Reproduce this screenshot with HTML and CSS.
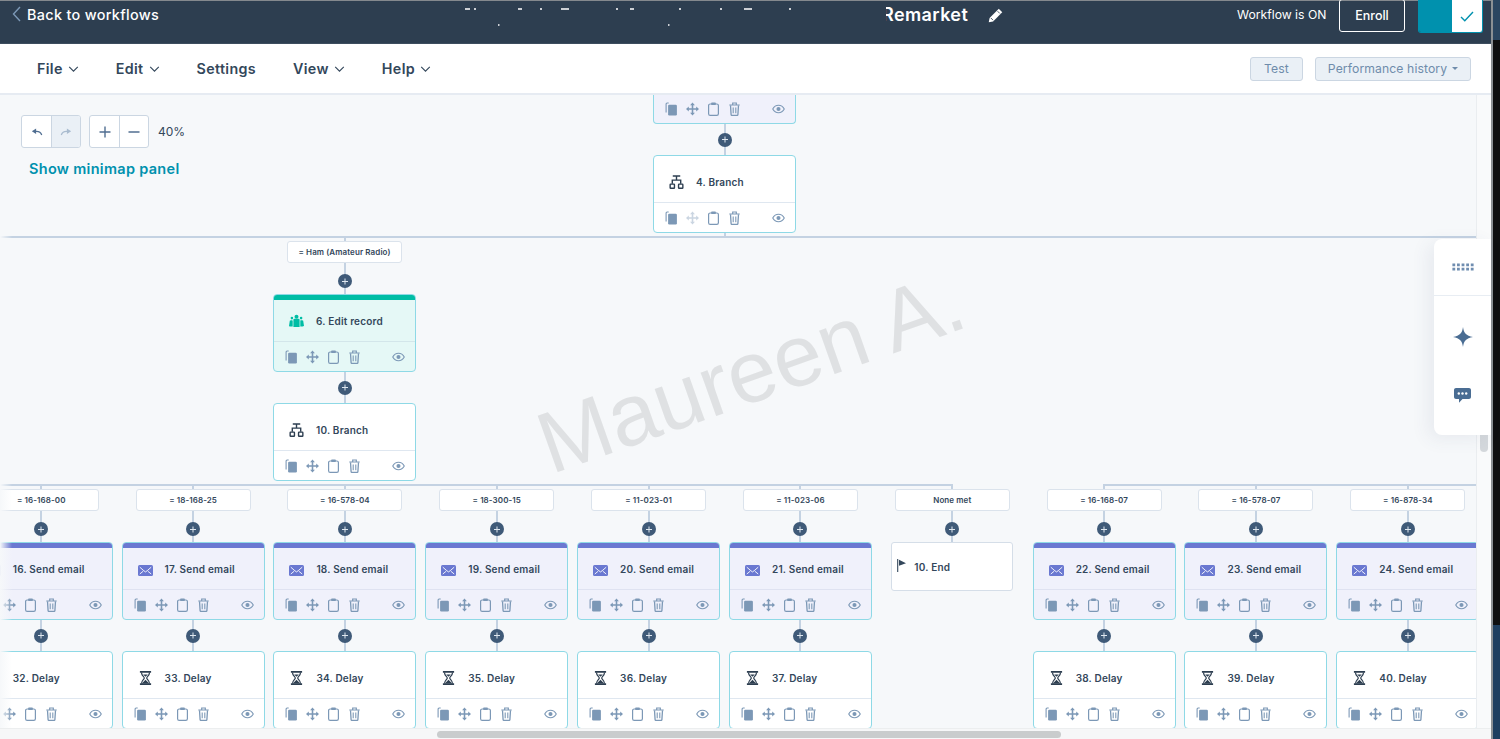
FILE: index.html
```html
<!DOCTYPE html>
<html lang="en">
<head>
<meta charset="utf-8">
<title>Workflow editor</title>
<link rel="stylesheet" href="styles.css">
</head>
<body>
<svg class="sprite" aria-hidden="true">
  <symbol id="i-copy" viewBox="0 0 12 14"><path d="M3.2 1H1.6C1 1 .6 1.4.6 2v8.4" fill="none" stroke="currentColor" stroke-width="1.1"/><rect x="2.6" y="2.8" width="8.8" height="10.6" rx="1.2" fill="currentColor"/></symbol>
  <symbol id="i-move" viewBox="0 0 14 14"><path d="M7 1.500v11M1.500 7h11" stroke="currentColor" stroke-width="1.700"/><path d="M7 0l2.600 3H4.400zM7 14l2.600-3H4.400zM0 7l3-2.600v5.200zM14 7l-3-2.600v5.200z" fill="currentColor"/></symbol>
  <symbol id="i-paste" viewBox="0 0 12 14"><rect x="1.1" y="2" width="9.8" height="11.3" rx="1.6" fill="none" stroke="currentColor" stroke-width="1.2"/><rect x="3.6" y=".6" width="4.8" height="2.4" rx=".8" fill="currentColor"/></symbol>
  <symbol id="i-trash" viewBox="0 0 12 14"><path d="M.8 3h10.400M4.200 2.600V1h3.600v1.600" fill="none" stroke="currentColor" stroke-width="1.200"/><path d="M2 3.400l.6 9.200c0 .4.400.8.800.8h5.200c.4 0 .8-.4.800-.8l.6-9.200" fill="none" stroke="currentColor" stroke-width="1.300"/><path d="M4.700 5.600v5.600M7.300 5.600v5.600" stroke="currentColor" stroke-width="1.100"/></symbol>
  <symbol id="i-eye" viewBox="0 0 14 10"><path d="M.8 5C2.200 2.400 4.400 1 7 1s4.800 1.400 6.200 4C11.800 7.600 9.600 9 7 9S2.200 7.600.8 5z" fill="none" stroke="currentColor" stroke-width="1.200"/><circle cx="7" cy="5" r="2.200" fill="currentColor"/></symbol>
  <symbol id="i-branch" viewBox="0 0 16 15"><path d="M4 1h8M8 1v4M3.500 9.500V5.500h9v4" fill="none" stroke="currentColor" stroke-width="1.500"/><rect x="1.200" y="9.800" width="4.600" height="4.400" rx=".6" fill="none" stroke="currentColor" stroke-width="1.500"/><rect x="10.200" y="9.800" width="4.600" height="4.400" rx=".6" fill="none" stroke="currentColor" stroke-width="1.500"/></symbol>
  <symbol id="i-mail" viewBox="0 0 15 11"><rect width="15" height="11" rx="1.500" fill="#6a78d1"/><path d="M1.800 2.200l4 3.500 1.700 1.200 1.700-1.200 4-3.500M1.800 9l3.400-2.800M13.200 9l-3.400-2.800" fill="none" stroke="#fff" stroke-width=".9"/></symbol>
  <symbol id="i-delay" viewBox="0 0 13 15"><path d="M.5 1h12M.5 14h12" stroke="currentColor" stroke-width="1.800"/><path d="M2.200 1.500c0 3.500 3 4.500 3 6s-3 2.500-3 6M10.800 1.500c0 3.500-3 4.500-3 6s3 2.500 3 6" fill="none" stroke="currentColor" stroke-width="1.300"/><path d="M6.500 9.500l4 4h-8zM4 3.800h5l-2.500 2.400z" fill="currentColor"/></symbol>
  <symbol id="i-people" viewBox="0 0 15 13"><circle cx="7.500" cy="2.200" r="2" fill="currentColor"/><path d="M4.400 5.400c0-.8.700-1.100 1.400-1.100h3.400c.7 0 1.400.3 1.400 1.100v7.200H4.400z" fill="currentColor"/><circle cx="2.900" cy="3.600" r="1.300" fill="currentColor"/><circle cx="12.100" cy="3.600" r="1.300" fill="currentColor"/><path d="M0 11.500l.8-5.200c.1-.7 3-.9 2.900 0v5.800H.6zM15 11.500l-.8-5.200c-.1-.7-3-.9-2.900 0v5.800h2.100z" fill="currentColor"/></symbol>
</svg>

<div class="window">
  <header class="topbar">
    <a class="back"><svg class="back-chev" viewBox="0 0 9 16"><path d="M8 1L1.500 8 8 15" fill="none" stroke="currentColor" stroke-width="1.400"/></svg>Back to workflows</a>
    <svg class="shards" viewBox="0 0 340 20" aria-hidden="true"><path d="M5 1h5M14 1h2M58 1h4M80 1h2M101 1h8M156 1h2M170 1h4M219 1h2M260 1h2M284 1h8M329 1h2M38 17h1.500M208 17h1.500" stroke="#fff" stroke-width="1.300"/></svg>
    <div class="title"><span class="title-text">Remarket</span></div>
    <svg class="pencil" viewBox="0 0 16 16"><path d="M11.500.8l3.700 3.700L5.400 14.300.8 15.200l.9-4.600z" fill="#fff"/><path d="M10.200 3.400l2.400 2.400M3 10.600l2.400 2.400" stroke="#2d3e50" stroke-width=".9"/></svg>
    <span class="status">Workflow is ON</span>
    <button class="enroll">Enroll</button>
    <div class="toggle"><span class="toggle-on"></span><span class="toggle-knob"><svg viewBox="0 0 14 11"><path d="M1 6l3.800 3.800L13 1" fill="none" stroke="#0091ae" stroke-width="1.400"/></svg></span></div>
  </header>

  <nav class="menubar">
    <span class="menu">File<svg class="chev" viewBox="0 0 12 7"><path d="M1 1l5 5 5-5" fill="none" stroke="currentColor" stroke-width="1.300"/></svg></span>
    <span class="menu">Edit<svg class="chev" viewBox="0 0 12 7"><path d="M1 1l5 5 5-5" fill="none" stroke="currentColor" stroke-width="1.300"/></svg></span>
    <span class="menu">Settings</span>
    <span class="menu">View<svg class="chev" viewBox="0 0 12 7"><path d="M1 1l5 5 5-5" fill="none" stroke="currentColor" stroke-width="1.300"/></svg></span>
    <span class="menu">Help<svg class="chev" viewBox="0 0 12 7"><path d="M1 1l5 5 5-5" fill="none" stroke="currentColor" stroke-width="1.300"/></svg></span>
    <span class="spacer"></span>
    <button class="ghost test">Test</button>
    <button class="ghost perf">Performance history<span class="caret"></span></button>
  </nav>

  <main class="work">
    <section class="canvas">
      <div class="controls">
        <div class="tool-row">
          <div class="btn-group">
            <span class="tool"><svg viewBox="0 0 14 10"><path d="M12.500 8.500C11.500 5.500 9 4 5.500 4.300" fill="none" stroke="currentColor" stroke-width="1.500"/><path d="M1 4.200L6 .8v6.400z" fill="currentColor"/></svg></span>
            <span class="tool off"><svg viewBox="0 0 14 10"><path d="M1.500 8.500C2.500 5.500 5 4 8.500 4.300" fill="none" stroke="currentColor" stroke-width="1.500"/><path d="M13 4.200L8 .8v6.400z" fill="currentColor"/></svg></span>
          </div>
          <div class="btn-group">
            <span class="tool"><svg viewBox="0 0 12 12"><path d="M6 .5v11M.5 6h11" stroke="currentColor" stroke-width="1.400"/></svg></span>
            <span class="tool"><svg viewBox="0 0 12 12"><path d="M.5 6h11" stroke="currentColor" stroke-width="1.400"/></svg></span>
          </div>
          <span class="zoom-level">40%</span>
        </div>
        <a class="minimap">Show minimap panel</a>
      </div>

      <div class="rail rail-top"></div>
      <div class="rail rail-a"></div>
      <div class="rail rail-b"></div>

      <div class="tree tree-top">
        <div class="node email cut">
          <div class="foot"><svg class="f"><use href="#i-copy"/></svg><svg class="f"><use href="#i-move"/></svg><svg class="f"><use href="#i-paste"/></svg><svg class="f"><use href="#i-trash"/></svg><svg class="e"><use href="#i-eye"/></svg></div>
        </div>
        <div class="link"><span class="plus"></span></div>
        <div class="node">
          <div class="band"></div>
          <div class="head"><svg class="ico"><use href="#i-branch"/></svg><span>4. Branch</span></div>
          <div class="foot"><svg class="f"><use href="#i-copy"/></svg><svg class="f dim"><use href="#i-move"/></svg><svg class="f"><use href="#i-paste"/></svg><svg class="f"><use href="#i-trash"/></svg><svg class="e"><use href="#i-eye"/></svg></div>
        </div>
        <div class="stub"></div>
      </div>

      <div class="tree tree-ham">
        <div class="stub"></div>
        <div class="pill">= Ham (Amateur Radio)</div>
        <div class="link"><span class="plus"></span></div>
        <div class="node record">
          <div class="band"></div>
          <div class="head"><svg class="ico teal"><use href="#i-people"/></svg><span>6. Edit record</span></div>
          <div class="foot"><svg class="f"><use href="#i-copy"/></svg><svg class="f"><use href="#i-move"/></svg><svg class="f"><use href="#i-paste"/></svg><svg class="f"><use href="#i-trash"/></svg><svg class="e"><use href="#i-eye"/></svg></div>
        </div>
        <div class="link"><span class="plus"></span></div>
        <div class="node">
          <div class="band"></div>
          <div class="head"><svg class="ico"><use href="#i-branch"/></svg><span>10. Branch</span></div>
          <div class="foot"><svg class="f"><use href="#i-copy"/></svg><svg class="f"><use href="#i-move"/></svg><svg class="f"><use href="#i-paste"/></svg><svg class="f"><use href="#i-trash"/></svg><svg class="e"><use href="#i-eye"/></svg></div>
        </div>
      </div>

      <div class="branches">
        <div class="col">
          <div class="stub"></div><div class="pill">= 16-168-00</div><div class="link"><span class="plus"></span></div>
          <div class="node email"><div class="band"></div><div class="head"><svg class="ico-mail"><use href="#i-mail"/></svg><span>16. Send email</span></div><div class="foot"><svg class="f"><use href="#i-copy"/></svg><svg class="f"><use href="#i-move"/></svg><svg class="f"><use href="#i-paste"/></svg><svg class="f"><use href="#i-trash"/></svg><svg class="e"><use href="#i-eye"/></svg></div></div>
          <div class="link"><span class="plus"></span></div>
          <div class="node"><div class="band"></div><div class="head"><svg class="ico"><use href="#i-delay"/></svg><span>32. Delay</span></div><div class="foot"><svg class="f"><use href="#i-copy"/></svg><svg class="f"><use href="#i-move"/></svg><svg class="f"><use href="#i-paste"/></svg><svg class="f"><use href="#i-trash"/></svg><svg class="e"><use href="#i-eye"/></svg></div></div>
        </div>
        <div class="col">
          <div class="stub"></div><div class="pill">= 18-168-25</div><div class="link"><span class="plus"></span></div>
          <div class="node email"><div class="band"></div><div class="head"><svg class="ico-mail"><use href="#i-mail"/></svg><span>17. Send email</span></div><div class="foot"><svg class="f"><use href="#i-copy"/></svg><svg class="f"><use href="#i-move"/></svg><svg class="f"><use href="#i-paste"/></svg><svg class="f"><use href="#i-trash"/></svg><svg class="e"><use href="#i-eye"/></svg></div></div>
          <div class="link"><span class="plus"></span></div>
          <div class="node"><div class="band"></div><div class="head"><svg class="ico"><use href="#i-delay"/></svg><span>33. Delay</span></div><div class="foot"><svg class="f"><use href="#i-copy"/></svg><svg class="f"><use href="#i-move"/></svg><svg class="f"><use href="#i-paste"/></svg><svg class="f"><use href="#i-trash"/></svg><svg class="e"><use href="#i-eye"/></svg></div></div>
        </div>
        <div class="col">
          <div class="stub"></div><div class="pill">= 16-578-04</div><div class="link"><span class="plus"></span></div>
          <div class="node email"><div class="band"></div><div class="head"><svg class="ico-mail"><use href="#i-mail"/></svg><span>18. Send email</span></div><div class="foot"><svg class="f"><use href="#i-copy"/></svg><svg class="f"><use href="#i-move"/></svg><svg class="f"><use href="#i-paste"/></svg><svg class="f"><use href="#i-trash"/></svg><svg class="e"><use href="#i-eye"/></svg></div></div>
          <div class="link"><span class="plus"></span></div>
          <div class="node"><div class="band"></div><div class="head"><svg class="ico"><use href="#i-delay"/></svg><span>34. Delay</span></div><div class="foot"><svg class="f"><use href="#i-copy"/></svg><svg class="f"><use href="#i-move"/></svg><svg class="f"><use href="#i-paste"/></svg><svg class="f"><use href="#i-trash"/></svg><svg class="e"><use href="#i-eye"/></svg></div></div>
        </div>
        <div class="col">
          <div class="stub"></div><div class="pill">= 18-300-15</div><div class="link"><span class="plus"></span></div>
          <div class="node email"><div class="band"></div><div class="head"><svg class="ico-mail"><use href="#i-mail"/></svg><span>19. Send email</span></div><div class="foot"><svg class="f"><use href="#i-copy"/></svg><svg class="f"><use href="#i-move"/></svg><svg class="f"><use href="#i-paste"/></svg><svg class="f"><use href="#i-trash"/></svg><svg class="e"><use href="#i-eye"/></svg></div></div>
          <div class="link"><span class="plus"></span></div>
          <div class="node"><div class="band"></div><div class="head"><svg class="ico"><use href="#i-delay"/></svg><span>35. Delay</span></div><div class="foot"><svg class="f"><use href="#i-copy"/></svg><svg class="f"><use href="#i-move"/></svg><svg class="f"><use href="#i-paste"/></svg><svg class="f"><use href="#i-trash"/></svg><svg class="e"><use href="#i-eye"/></svg></div></div>
        </div>
        <div class="col">
          <div class="stub"></div><div class="pill">= 11-023-01</div><div class="link"><span class="plus"></span></div>
          <div class="node email"><div class="band"></div><div class="head"><svg class="ico-mail"><use href="#i-mail"/></svg><span>20. Send email</span></div><div class="foot"><svg class="f"><use href="#i-copy"/></svg><svg class="f"><use href="#i-move"/></svg><svg class="f"><use href="#i-paste"/></svg><svg class="f"><use href="#i-trash"/></svg><svg class="e"><use href="#i-eye"/></svg></div></div>
          <div class="link"><span class="plus"></span></div>
          <div class="node"><div class="band"></div><div class="head"><svg class="ico"><use href="#i-delay"/></svg><span>36. Delay</span></div><div class="foot"><svg class="f"><use href="#i-copy"/></svg><svg class="f"><use href="#i-move"/></svg><svg class="f"><use href="#i-paste"/></svg><svg class="f"><use href="#i-trash"/></svg><svg class="e"><use href="#i-eye"/></svg></div></div>
        </div>
        <div class="col">
          <div class="stub"></div><div class="pill">= 11-023-06</div><div class="link"><span class="plus"></span></div>
          <div class="node email"><div class="band"></div><div class="head"><svg class="ico-mail"><use href="#i-mail"/></svg><span>21. Send email</span></div><div class="foot"><svg class="f"><use href="#i-copy"/></svg><svg class="f"><use href="#i-move"/></svg><svg class="f"><use href="#i-paste"/></svg><svg class="f"><use href="#i-trash"/></svg><svg class="e"><use href="#i-eye"/></svg></div></div>
          <div class="link"><span class="plus"></span></div>
          <div class="node"><div class="band"></div><div class="head"><svg class="ico"><use href="#i-delay"/></svg><span>37. Delay</span></div><div class="foot"><svg class="f"><use href="#i-copy"/></svg><svg class="f"><use href="#i-move"/></svg><svg class="f"><use href="#i-paste"/></svg><svg class="f"><use href="#i-trash"/></svg><svg class="e"><use href="#i-eye"/></svg></div></div>
        </div>
        <div class="col">
          <div class="stub"></div><div class="pill">None met</div><div class="link"><span class="plus"></span></div>
          <div class="end"><svg class="flag" viewBox="0 0 10 13"><path d="M.7 0v13" stroke="#33475b" stroke-width="1.100"/><path d="M2 .8l7 3.400-7 2.600z" fill="#33475b"/></svg><span>10. End</span></div>
        </div>
        <div class="col">
          <div class="stub"></div><div class="pill">= 16-168-07</div><div class="link"><span class="plus"></span></div>
          <div class="node email"><div class="band"></div><div class="head"><svg class="ico-mail"><use href="#i-mail"/></svg><span>22. Send email</span></div><div class="foot"><svg class="f"><use href="#i-copy"/></svg><svg class="f"><use href="#i-move"/></svg><svg class="f"><use href="#i-paste"/></svg><svg class="f"><use href="#i-trash"/></svg><svg class="e"><use href="#i-eye"/></svg></div></div>
          <div class="link"><span class="plus"></span></div>
          <div class="node"><div class="band"></div><div class="head"><svg class="ico"><use href="#i-delay"/></svg><span>38. Delay</span></div><div class="foot"><svg class="f"><use href="#i-copy"/></svg><svg class="f"><use href="#i-move"/></svg><svg class="f"><use href="#i-paste"/></svg><svg class="f"><use href="#i-trash"/></svg><svg class="e"><use href="#i-eye"/></svg></div></div>
        </div>
        <div class="col">
          <div class="stub"></div><div class="pill">= 16-578-07</div><div class="link"><span class="plus"></span></div>
          <div class="node email"><div class="band"></div><div class="head"><svg class="ico-mail"><use href="#i-mail"/></svg><span>23. Send email</span></div><div class="foot"><svg class="f"><use href="#i-copy"/></svg><svg class="f"><use href="#i-move"/></svg><svg class="f"><use href="#i-paste"/></svg><svg class="f"><use href="#i-trash"/></svg><svg class="e"><use href="#i-eye"/></svg></div></div>
          <div class="link"><span class="plus"></span></div>
          <div class="node"><div class="band"></div><div class="head"><svg class="ico"><use href="#i-delay"/></svg><span>39. Delay</span></div><div class="foot"><svg class="f"><use href="#i-copy"/></svg><svg class="f"><use href="#i-move"/></svg><svg class="f"><use href="#i-paste"/></svg><svg class="f"><use href="#i-trash"/></svg><svg class="e"><use href="#i-eye"/></svg></div></div>
        </div>
        <div class="col">
          <div class="stub"></div><div class="pill">= 16-878-34</div><div class="link"><span class="plus"></span></div>
          <div class="node email"><div class="band"></div><div class="head"><svg class="ico-mail"><use href="#i-mail"/></svg><span>24. Send email</span></div><div class="foot"><svg class="f"><use href="#i-copy"/></svg><svg class="f"><use href="#i-move"/></svg><svg class="f"><use href="#i-paste"/></svg><svg class="f"><use href="#i-trash"/></svg><svg class="e"><use href="#i-eye"/></svg></div></div>
          <div class="link"><span class="plus"></span></div>
          <div class="node"><div class="band"></div><div class="head"><svg class="ico"><use href="#i-delay"/></svg><span>40. Delay</span></div><div class="foot"><svg class="f"><use href="#i-copy"/></svg><svg class="f"><use href="#i-move"/></svg><svg class="f"><use href="#i-paste"/></svg><svg class="f"><use href="#i-trash"/></svg><svg class="e"><use href="#i-eye"/></svg></div></div>
        </div>
      </div>

      <div class="fade-left"></div>
      <div class="watermark">Maureen A.</div>
    </section>
    <aside class="vstrip"><span class="vthumb"></span></aside>
    <div class="sidepanel">
      <div class="side-top"><svg class="side-grid" viewBox="0 0 22 8"><path d="M.4 .4h2.800v2.800H.4zM5 .4h2.800v2.800H5zM9.600 .4h2.800v2.800H9.600zM14.200 .4H17v2.800h-2.800zM18.800 .4h2.800v2.800h-2.800zM.4 4.800h2.800v2.800H.4zM5 4.800h2.800v2.800H5zM9.600 4.800h2.800v2.800H9.600zM14.200 4.800H17v2.800h-2.800zM18.800 4.800h2.800v2.800h-2.800z" fill="#6f8db0"/></svg></div>
      <div class="side-rest">
        <svg class="side-star" viewBox="0 0 20 20"><path d="M10 0c.8 6 3 8.600 10 10-7 1.400-9.200 4-10 10-.8-6-3-8.600-10-10 7-1.400 9.200-4 10-10z" fill="#4a6d93"/></svg>
        <svg class="side-chat" viewBox="0 0 17 15"><path d="M2 0h13c1.100 0 2 .9 2 2v7c0 1.100-.9 2-2 2H8.500L5 14.800V11H2c-1.100 0-2-.9-2-2V2C0 .9.900 0 2 0z" fill="#4a6d93"/><circle cx="4.800" cy="5.500" r="1.200" fill="#fff"/><circle cx="8.500" cy="5.500" r="1.200" fill="#fff"/><circle cx="12.200" cy="5.500" r="1.200" fill="#fff"/></svg>
      </div>
    </div>
  </main>
  <div class="hscroll"><span class="hthumb"></span></div>
</div>
<div class="edge"></div>
</body>
</html>
```
FILE: styles.css
```css
* { box-sizing: border-box; }
html, body { margin: 0; height: 739px; overflow: hidden; }
body { display: flex; font-family: Inter, "Noto Sans", "Liberation Sans", sans-serif; color: #33475b; background: #111; }
.sprite { position: absolute; width: 0; height: 0; }
.window { width: 1491px; height: 739px; display: flex; flex-direction: column; background: #fff; flex: none; }
.edge { width: 9px; height: 739px; border-left: 2px solid #8b9094; background: linear-gradient(#2b4661 0 40px, #0e0f10 40px 625px, #1e3f60 625px); }

/* top bar */
.topbar { position: relative; height: 44px; flex: none; display: flex; align-items: flex-start; background: #2d3e50; border-top: 1px solid #84898e; border-bottom: 1px solid #3d4d5e; color: #fff; }
.back { display: flex; align-items: center; margin: 3px 0 0 12px; height: 20px; font-size: 14.400px; font-weight: 500; letter-spacing: .32px; }
.back-chev { width: 9px; height: 16px; margin-right: 6px; color: #7c98b6; }
.shards { position: absolute; left: 460px; top: 7px; width: 340px; height: 20px; }
.title { position: absolute; left: 884px; top: 3px; height: 22px; }
.title::before { content: ""; position: absolute; left: -2px; top: 3px; width: 3.500px; height: 16px; background: #2d3e50; }
.title-text { display: block; margin-left: -2px; font-size: 18px; line-height: 22px; font-weight: 600; letter-spacing: .4px; white-space: nowrap; }
.pencil { position: absolute; left: 988px; top: 7px; width: 15px; height: 15px; }
.status { position: absolute; left: 1237px; top: 5px; font-size: 12.200px; line-height: 18px; }
.enroll { position: absolute; left: 1339px; top: -2px; width: 66px; height: 33px; padding: 0; background: transparent; border: 1px solid #fff; border-radius: 3px; color: #fff; font: 500 12.500px Inter, sans-serif; }
.toggle { position: absolute; left: 1418px; top: -1px; width: 65px; height: 33px; display: flex; border-radius: 0 0 3px 3px; overflow: hidden; border: 1px solid #0091ae; border-top: 0; }
.toggle-on { width: 33px; background: #0091ae; }
.toggle-knob { flex: 1; background: #fff; display: flex; align-items: center; justify-content: center; }
.toggle-knob svg { width: 14px; height: 11px; }

/* menu bar */
.menubar { height: 51px; flex: none; display: flex; align-items: center; padding: 0 20px 0 37px; background: #fff; border-bottom: 2px solid #e6ebf2; }
.menu { display: flex; align-items: center; font-size: 14.300px; font-weight: 600; letter-spacing: .35px; margin-right: 37px; }
.chev { width: 11px; height: 6px; margin-left: 5px; }
.spacer { flex: 1; }
.ghost { height: 24px; padding: 0; background: #eaf0f6; border: 1px solid #cbd6e2; border-radius: 3px; color: #6f8cab; font: 400 12.200px Inter, sans-serif; letter-spacing: .1px; }
.test { width: 53px; margin-right: 12px; }
.perf { width: 156px; display: flex; align-items: center; justify-content: center; }
.caret { width: 0; height: 0; margin-left: 5px; border: 3.500px solid transparent; border-top-color: #6f8cab; border-bottom: 0; }

/* work area */
.work { position: relative; flex: 1; display: flex; min-height: 0; }
.canvas { position: relative; width: 1476px; height: 633px; overflow: hidden; background: #f6f8fa; flex: none; }
.vstrip { position: relative; flex: 1; background: #f9fafb; border-left: 1px solid #eaedf0; }
.vthumb { position: absolute; left: 3px; top: 200px; width: 8px; height: 157px; border-radius: 4px; background: #d4d8dc; }
.hscroll { position: relative; height: 11px; flex: none; background: #f6f7f8; border-top: 1px solid #eceeef; }
.hthumb { position: absolute; left: 437px; top: 2px; width: 624px; height: 7px; border-radius: 4px; background: #c9cccd; }

.controls { position: absolute; left: 21px; top: 20px; }
.tool-row { display: flex; align-items: center; gap: 8px; }
.btn-group { display: flex; height: 33px; border: 1px solid #cbd6e2; border-radius: 3px; background: #fff; overflow: hidden; }
.tool { width: 29px; display: flex; align-items: center; justify-content: center; color: #506e91; }
.tool + .tool { border-left: 1px solid #cbd6e2; }
.tool svg { width: 12px; height: 12px; }
.tool.off { background: #eaf0f6; color: #a9bbcf; }
.zoom-level { font-size: 12px; margin-left: 1px; }
.minimap { display: block; margin: 12px 0 0 8px; color: #0091ae; font-size: 14.500px; font-weight: 600; letter-spacing: .3px; line-height: 18px; }

.rail { position: absolute; height: 2px; background: #c4d2e2; }
.rail-top { left: 0; right: 0; top: 141px; }
.rail-a { left: 0; width: 953px; top: 389px; }
.rail-b { left: 1103px; right: 0; top: 389px; }

.tree { position: absolute; width: 143px; display: flex; flex-direction: column; align-items: center; }
.tree-top { left: 653px; top: 0; }
.tree-ham { left: 273px; top: 142px; }
.branches { position: absolute; left: -34.700px; top: 390px; display: flex; }
.col { width: 151.850px; display: flex; flex-direction: column; align-items: center; flex: none; }

.stub { width: 2px; height: 4px; background: #c4d2e2; flex: none; }
.pill { width: 115px; height: 22px; flex: none; display: flex; align-items: center; justify-content: center; background: #fff; border: 1px solid #dbe3ec; border-radius: 3px; font-size: 8px; font-weight: 600; letter-spacing: .1px; }
.link { position: relative; width: 2px; height: 31px; flex: none; background: #c4d2e2; display: flex; align-items: center; justify-content: center; }
.plus { position: relative; width: 14px; height: 14px; flex: none; border-radius: 50%; background: #3f5a78; }
.pill + .link .plus { margin-top: 5px; }
.plus::before, .plus::after { content: ""; position: absolute; left: 4px; top: 6.500px; width: 6px; height: 1px; background: #dfe7ef; }
.plus::after { transform: rotate(90deg); }

.node { width: 143px; height: 78px; flex: none; display: flex; flex-direction: column; background: #fff; border: 1px solid #8ed9e6; border-radius: 4px; overflow: hidden; font-size: 10px; font-weight: 600; letter-spacing: .2px; }
.node.cut { height: 29px; border-top: 0; border-radius: 0 0 4px 4px; }
.node.cut .foot { height: 28px; border-top: 0; }
.band { height: 5px; flex: none; }
.head { flex: 1; display: flex; align-items: center; padding: 1px 0 0 15px; }
.head span { margin-left: 11px; white-space: nowrap; }
.foot { height: 30px; flex: none; display: flex; align-items: center; padding-left: 11px; border-top: 1px solid #dfe7f0; color: #7c98b6; }
.f { width: 13px; height: 14px; margin-right: 8px; flex: none; }
.f.dim { opacity: .4; }
.e { width: 13px; height: 10px; margin-left: auto; margin-right: 10px; flex: none; }
.ico { width: 15px; height: 14px; flex: none; color: #2d3e50; margin-right: 1px; }
.ico.teal { color: #00bda5; }
.ico-mail { width: 15px; height: 11px; flex: none; margin: 2px 1px 0 0; }
.email { background: #f0f1fb; }
.email .band { background: #6a78d1; }
.email .foot { border-top-color: #dfe2f1; }
.record { background: #e5f8f6; }
.record .band { background: #00bda5; }
.record .foot { border-top-color: #d3e6ea; }
.end { width: 122px; height: 49px; flex: none; display: flex; align-items: center; padding-left: 5px; background: #fff; border: 1px solid #d5dee8; border-radius: 3px; font-size: 10px; font-weight: 600; letter-spacing: .2px; }
.flag { width: 10px; height: 13px; margin: -2px 7px 0 0; flex: none; }

.fade-left { position: absolute; left: 0; top: 0; width: 12px; height: 100%; background: linear-gradient(90deg, #f6f8fa, rgba(246,248,250,0)); pointer-events: none; }
.watermark { position: absolute; left: 528px; top: 233px; font: 400 87px/1 "Liberation Sans", Arial, sans-serif; color: #dfe1e3; white-space: nowrap; transform: rotate(-19.500deg); pointer-events: none; }

.sidepanel { position: absolute; left: 1434px; top: 144px; width: 57px; height: 196px; display: flex; flex-direction: column; background: #fff; border-radius: 8px 0 0 8px; box-shadow: -6px 4px 18px rgba(60,80,110,.08); }
.side-top { height: 57px; flex: none; display: flex; align-items: center; justify-content: center; border-bottom: 1px solid #e8edf3; }
.side-grid { width: 22px; height: 8px; }
.side-rest { flex: 1; display: flex; flex-direction: column; align-items: center; }
.side-star { width: 20px; height: 20px; margin-top: 31px; }
.side-chat { width: 17px; height: 15px; margin-top: 41px; }
```
